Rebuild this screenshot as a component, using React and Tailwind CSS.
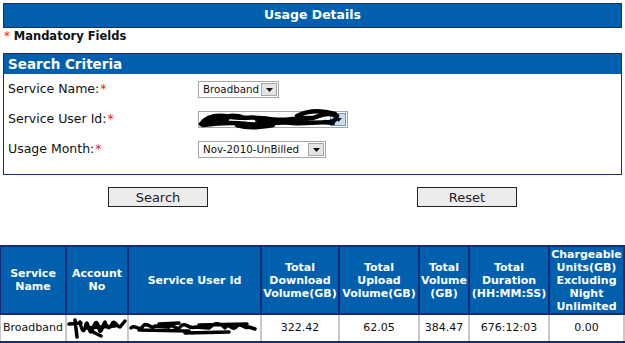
import React from "react";

const font = { fontFamily: '"DejaVu Sans", Verdana, sans-serif' };

function Arrow({ blue }) {
  return (
    <div
      className={
        "absolute right-[1px] top-[1px] bottom-[1px] w-[16px] border flex items-end justify-center pb-[3px] " +
        (blue ? "bg-[#c9dcf2] border-[#6f98c8]" : "bg-[#e4e4e4] border-[#a8a8a8]")
      }
    >
      <svg width="7" height="4" viewBox="0 0 7 4">
        <path d="M0 0 H7 L3.5 4 Z" fill="#111" />
      </svg>
    </div>
  );
}

function Select({ w, text, blue, children }) {
  return (
    <div
      className={`relative h-[17px] border border-[#a5a5a5] bg-white text-[10.3px] text-[#111] flex items-center pl-[4px] ${w}`}
    >
      <span className="leading-none">{text}</span>
      <Arrow blue={blue} />
      {children}
    </div>
  );
}

function Label({ children }) {
  return (
    <div className="text-[12.5px] text-[#111] flex items-center">
      {children}
      <span className="text-[#e8242a] ml-[1px]">*</span>
    </div>
  );
}

function Scribble({ w, h, d, sw = 4 }) {
  return (
    <svg width={w} height={h} viewBox={`0 0 ${w} ${h}`} className="block">
      <path d={d} fill="none" stroke="#000" strokeWidth={sw} strokeLinecap="round" strokeLinejoin="round" />
    </svg>
  );
}

export default function App() {
  return (
    <div className="w-[625px] h-[343px] bg-white overflow-hidden" style={font}>
      <div className="mx-[3px] mt-[3px] h-[25px] border border-[#1b2b78] bg-[#0060ae] flex items-center justify-center text-white font-bold text-[12.5px]">
        Usage Details
      </div>

      <div className="h-[16px] mt-[1px] flex items-center pl-[4px] text-[11.5px] font-bold text-[#111]">
        <span className="text-[#e8242a] font-normal mr-[4px]">*</span>
        Mandatory Fields
      </div>

      <div className="mx-[3px] mt-[8px] border border-[#1b2b78] pb-[10px]">
        <div className="h-[20px] bg-[#0060ae] flex items-center pl-[4px] text-white font-bold text-[13.5px]">
          Search Criteria
        </div>
        <div className="grid grid-cols-[190px_1fr] pl-[4px]">
          <div className="h-[30px] flex items-center">
            <Label>Service Name:</Label>
          </div>
          <div className="h-[30px] flex items-center">
            <Select w="w-[81px]" text="Broadband" />
          </div>
          <div className="h-[30px] flex items-center">
            <Label>Service User Id:</Label>
          </div>
          <div className="h-[30px] flex items-center">
            <Select w="w-[150px]" text="" blue>
              <div className="absolute left-[-2px] top-[-6px]">
                <Scribble
                  w={146}
                  h={26}
                  sw={4.5}
                  d="M4 18 C10 10 20 8 34 11 C46 13 58 10 72 13 C86 16 100 11 116 12 C124 9 132 6 140 10 M6 19 C20 17 36 16 50 18 C64 20 78 15 96 17 C110 18 124 15 136 17 M8 15 L30 13 M40 19 C52 23 64 21 76 19 M100 10 C112 4 124 4 138 8 C142 13 136 17 128 16 M20 13 C28 9 40 9 48 12 M60 14 L110 14"
                />
              </div>
            </Select>
          </div>
          <div className="h-[30px] flex items-center">
            <Label>Usage Month:</Label>
          </div>
          <div className="h-[30px] flex items-center">
            <Select w="w-[128px]" text="Nov-2010-UnBilled" />
          </div>
        </div>
      </div>

      <div className="mt-[12px] flex justify-center gap-[209px]">
        <button className="w-[100px] h-[20px] bg-[#ececec] border border-[#222] text-[13px] text-[#222] leading-none" style={font}>
          Search
        </button>
        <button className="w-[100px] h-[20px] bg-[#ececec] border border-[#222] text-[13px] text-[#222] leading-none" style={font}>
          Reset
        </button>
      </div>

      <table className="mt-[38px] -ml-[1px] w-[626px] table-fixed border-collapse text-[11px]">
        <colgroup>
          <col className="w-[66px]" />
          <col className="w-[62px]" />
          <col className="w-[133px]" />
          <col className="w-[78px]" />
          <col className="w-[80px]" />
          <col className="w-[50px]" />
          <col className="w-[80px]" />
          <col className="w-[75px]" />
        </colgroup>
        <thead>
          <tr className="h-[68px]">
            {[
              ["Service", "Name"],
              ["Account", "No"],
              ["Service User Id"],
              ["Total", "Download", "Volume(GB)"],
              ["Total", "Upload", "Volume(GB)"],
              ["Total", "Volume", "(GB)"],
              ["Total", "Duration", "(HH:MM:SS)"],
              ["Chargeable", "Units(GB)", "Excluding", "Night", "Unlimited"],
            ].map((lines, i) => (
              <th
                key={i}
                className="bg-[#0060ae] border-2 border-[#1b2b78] text-white font-bold text-center align-middle leading-[13px] px-0 whitespace-nowrap"
              >
                {lines.map((l, j) => (
                  <div key={j}>{l}</div>
                ))}
              </th>
            ))}
          </tr>
        </thead>
        <tbody>
          <tr className="h-[28px] text-[#111]">
            <td className="border-2 border-[#c8c8c8] border-b-[#1b2b78] pl-[2px] text-left whitespace-nowrap">Broadband</td>
            <td className="border-2 border-[#c8c8c8] border-b-[#1b2b78] p-0 align-middle">
              <Scribble
                w={60}
                h={24}
                sw={3.5}
                d="M2 8 L14 7 M8 4 L10 21 M13 6 C15 16 17 18 19 8 C21 3 22 20 25 15 C28 5 30 3 32 13 C34 20 36 8 38 6 C40 12 42 14 45 8 C47 3 50 11 53 11 L58 5 M18 12 L48 10 M26 16 L34 20"
              />
            </td>
            <td className="border-2 border-[#c8c8c8] border-b-[#1b2b78] p-0 align-middle">
              <Scribble
                w={129}
                h={22}
                sw={3.5}
                d="M2 11 C6 6 10 16 14 9 C18 4 22 13 26 9 L40 10 C44 5 48 16 52 9 C56 4 60 13 66 10 L80 11 C86 5 92 6 96 11 C100 4 104 16 108 9 C112 5 116 13 120 10 L126 12 M10 13 L60 14 M70 8 L118 7 M30 7 L50 6 M56 16 L100 15"
              />
            </td>
            <td className="border-2 border-[#c8c8c8] border-b-[#1b2b78] text-center">322.42</td>
            <td className="border-2 border-[#c8c8c8] border-b-[#1b2b78] text-center">62.05</td>
            <td className="border-2 border-[#c8c8c8] border-b-[#1b2b78] text-center">384.47</td>
            <td className="border-2 border-[#c8c8c8] border-b-[#1b2b78] text-center">676:12:03</td>
            <td className="border-2 border-[#c8c8c8] border-b-[#1b2b78] text-center">0.00</td>
          </tr>
        </tbody>
      </table>
    </div>
  );
}
